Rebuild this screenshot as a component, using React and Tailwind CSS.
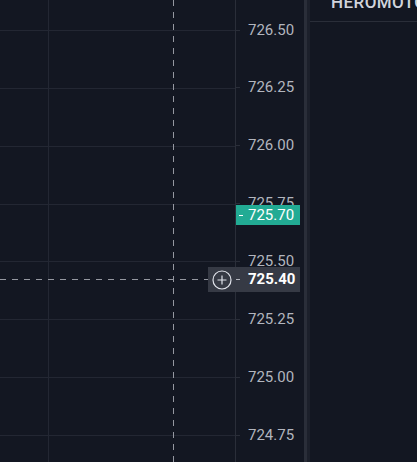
import React from 'react';

const TOP = 30;
const STEP = 57.86;
const prices = ['726.50', '726.25', '726.00', '725.75', '725.50', '725.25', '725.00', '724.75'];

const PriceScale = () => {
  return (
    <div className="relative w-[69px] h-full border-l border-[#2a2e39]">
      {prices.map((p, i) => (
        <div
          key={p}
          className="absolute left-0 right-0 flex items-center h-5 -translate-y-1/2"
          style={{ top: TOP + STEP * i }}
        >
          <span className="w-[4px] h-px bg-[#2a2e39] mr-[8px]" />
          <span className="text-[15px] text-[#b2b5be] leading-none">{p}</span>
        </div>
      ))}

      {/* last price */}
      <div className="absolute left-0 top-[205px] w-[64px] h-[20px] bg-[#22ab94] flex items-center">
        <span className="w-[4px] h-px bg-white ml-[3px] mr-[5px]" />
        <span className="text-[15px] text-white leading-none">725.70</span>
      </div>
    </div>
  );
};

const App = () => {
  return (
    <div
      className="w-[417px] h-[462px] bg-[#131722] flex overflow-hidden relative"
      style={{ fontFamily: 'Roboto, "Liberation Sans", sans-serif' }}
    >
      {/* chart pane */}
      <div className="relative w-[235px] h-full">
        <svg className="absolute inset-0" width="235" height="462">
          {prices.map((p, i) => {
            const y = Math.round(TOP + STEP * i) + 0.5;
            return <line key={p} x1="0" x2="235" y1={y} y2={y} stroke="#232733" strokeWidth="1" />;
          })}
          <line x1="48.5" x2="48.5" y1="0" y2="462" stroke="#232733" strokeWidth="1" />
          <line x1="173.5" x2="173.5" y1="0" y2="462" stroke="#9598a1" strokeWidth="1" strokeDasharray="6 6" />
          <line x1="0" x2="235" y1="279.5" y2="279.5" stroke="#9598a1" strokeWidth="1" strokeDasharray="6 6" />
        </svg>
      </div>

      <PriceScale />

      {/* crosshair price label */}
      <div className="absolute left-[208px] top-[267px] w-[92px] h-[25px] bg-[#363a45] flex items-center">
        <svg className="ml-[4px]" width="20" height="20" viewBox="0 0 20 20">
          <circle cx="10" cy="10" r="9" fill="none" stroke="#e0e3eb" strokeWidth="1.2" />
          <path d="M10 5.5v9M5.5 10h9" stroke="#e0e3eb" strokeWidth="1.2" />
        </svg>
        <span className="w-[4px] h-px bg-[#b2b5be] ml-[4px] mr-[8px]" />
        <span className="text-[15px] font-bold text-white leading-none">725.40</span>
      </div>

      {/* pane separator */}
      <div className="w-[3px] h-full bg-[#2a2e39]" />
      <div className="w-[3px] h-full bg-[#1c202b]" />

      {/* right panel */}
      <div className="flex-1 h-full overflow-hidden">
        <div className="h-[22px] border-b border-[#2a2e39] relative">
          <span className="absolute left-[21px] top-[-6px] text-[17px] font-medium text-[#d1d4dc] whitespace-nowrap leading-none tracking-wide">
            HEROMOTOCORP
          </span>
        </div>
      </div>
    </div>
  );
};

export default App;
